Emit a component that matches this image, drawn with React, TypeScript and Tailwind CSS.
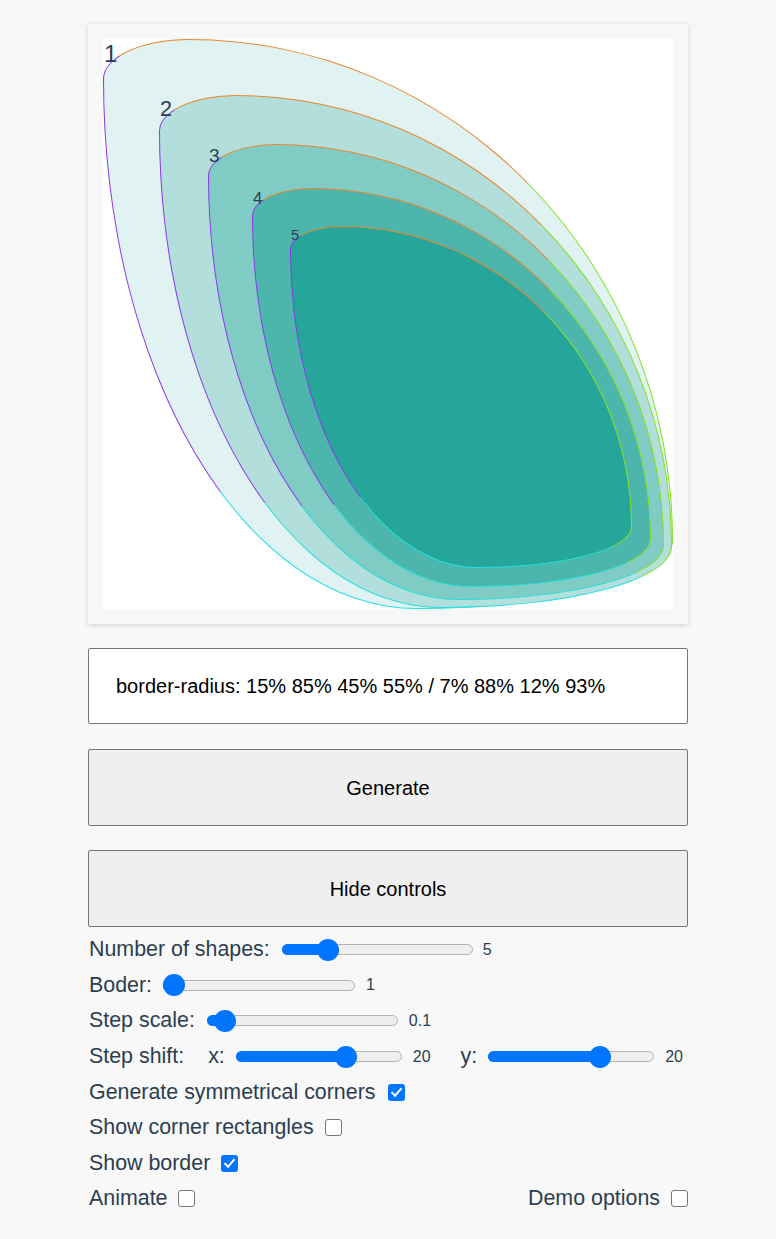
import React from "react";

type Shape = { off: number; size: number; bg: string; font: string; label: string };

const shapes: Shape[] = [
  { off: 0, size: 570, bg: "bg-[#e0f2f1]", font: "text-[24px]", label: "1" },
  { off: 56, size: 513, bg: "bg-[#b2dfdb]", font: "text-[21.6px]", label: "2" },
  { off: 105, size: 456, bg: "bg-[#80cbc4]", font: "text-[19.2px]", label: "3" },
  { off: 149, size: 399, bg: "bg-[#4db6ac]", font: "text-[16.8px]", label: "4" },
  { off: 187, size: 342, bg: "bg-[#26a69a]", font: "text-[14.4px]", label: "5" },
];

function Slider({ width, frac }: { width: number; frac: number }) {
  const pos = 11 + frac * (width - 22);
  return (
    <div className="relative h-[22px] shrink-0" style={{ width }}>
      <div className="absolute left-0 right-0 top-[5.5px] h-[11px] rounded-full border border-[#b2b2b2] bg-[#efefef]" />
      <div
        className="absolute left-0 top-[5.5px] h-[11px] rounded-full bg-[#0075ff]"
        style={{ width: pos + 2 }}
      />
      <div
        className="absolute top-0 h-[22px] w-[22px] rounded-full bg-[#0075ff]"
        style={{ left: pos - 11 }}
      />
    </div>
  );
}

function Checkbox({ checked }: { checked: boolean }) {
  if (checked) {
    return (
      <span className="inline-flex h-[17px] w-[17px] shrink-0 items-center justify-center rounded-[3px] bg-[#0075ff]">
        <svg width="13" height="13" viewBox="0 0 13 13" fill="none">
          <path d="M2.2 6.8 L5.1 9.7 L10.9 2.9" stroke="white" strokeWidth="2" strokeLinecap="square" />
        </svg>
      </span>
    );
  }
  return <span className="inline-block h-[17px] w-[17px] shrink-0 rounded-[3px] border border-[#767676] bg-white" />;
}

export default function App() {
  return (
    <div className="min-h-screen bg-[#f8f8f8] font-['Liberation_Sans',Arial,sans-serif] text-[#2c3e50]">
      <div className="mx-auto w-[600px] pt-[24px] pb-[23px]">
        <div className="h-[600px] w-[600px] bg-[#f8f8f8] p-[15px] shadow-[0_1px_5px_rgba(0,0,0,0.16)]">
          <div className="relative h-[570px] w-[570px] bg-white">
            {shapes.map((s) => (
              <div
                key={s.label}
                className={`absolute rounded-[15%_85%_45%_55%/7%_88%_12%_93%] border border-t-[#e8872e] border-r-[#84e024] border-b-[#22dfe0] border-l-[#8a3aea] ${s.bg}`}
                style={{ left: s.off, top: s.off, width: s.size, height: s.size }}
              >
                <span className={`block leading-[normal] text-[#2c3e50] ${s.font}`}>{s.label}</span>
              </div>
            ))}
          </div>
        </div>

        <div className="mt-[24px] flex h-[76px] items-center rounded-[2px] border border-[#767676] bg-white pl-[27px] text-[20px] text-black">
          border-radius: 15% 85% 45% 55% / 7% 88% 12% 93%
        </div>

        <button className="mt-[25px] flex h-[77px] w-full items-center justify-center rounded-[2px] border border-[#767676] bg-[#efefef] text-[20px] text-black">
          Generate
        </button>
        <button className="mt-[24px] flex h-[77px] w-full items-center justify-center rounded-[2px] border border-[#767676] bg-[#efefef] text-[20px] text-black">
          Hide controls
        </button>

        <div className="mt-[5px] flex flex-col text-[21.4px] leading-[normal]">
          <div className="flex h-[35.6px] items-center pl-px">
            <span>Number of shapes:</span>
            <div className="ml-[12px]">
              <Slider width={191} frac={0.21} />
            </div>
            <span className="ml-[10px] text-[16px]">5</span>
          </div>
          <div className="flex h-[35.6px] items-center pl-px">
            <span>Boder:</span>
            <div className="ml-[11px]">
              <Slider width={192} frac={0} />
            </div>
            <span className="ml-[11px] text-[16px]">1</span>
          </div>
          <div className="flex h-[35.6px] items-center pl-px">
            <span>Step scale:</span>
            <div className="ml-[12px]">
              <Slider width={191} frac={0.04} />
            </div>
            <span className="ml-[11px] text-[16px]">0.1</span>
          </div>
          <div className="flex h-[35.6px] items-center pl-px">
            <span>Step shift:</span>
            <span className="ml-[24px]">x:</span>
            <div className="ml-[11px]">
              <Slider width={166} frac={0.69} />
            </div>
            <span className="ml-[11px] text-[16px]">20</span>
            <span className="ml-[30px]">y:</span>
            <div className="ml-[11px]">
              <Slider width={166} frac={0.7} />
            </div>
            <span className="ml-[11px] text-[16px]">20</span>
          </div>
          <div className="flex h-[35.6px] items-center gap-[12px] pl-px">
            <span>Generate symmetrical corners</span>
            <Checkbox checked />
          </div>
          <div className="flex h-[35.6px] items-center gap-[11px] pl-px">
            <span>Show corner rectangles</span>
            <Checkbox checked={false} />
          </div>
          <div className="flex h-[35.6px] items-center gap-[11px] pl-px">
            <span>Show border</span>
            <Checkbox checked />
          </div>
          <div className="flex h-[35.6px] items-center justify-between pl-px">
            <div className="flex items-center gap-[11px]">
              <span>Animate</span>
              <Checkbox checked={false} />
            </div>
            <div className="flex items-center gap-[11px]">
              <span>Demo options</span>
              <Checkbox checked={false} />
            </div>
          </div>
        </div>
      </div>
    </div>
  );
}
